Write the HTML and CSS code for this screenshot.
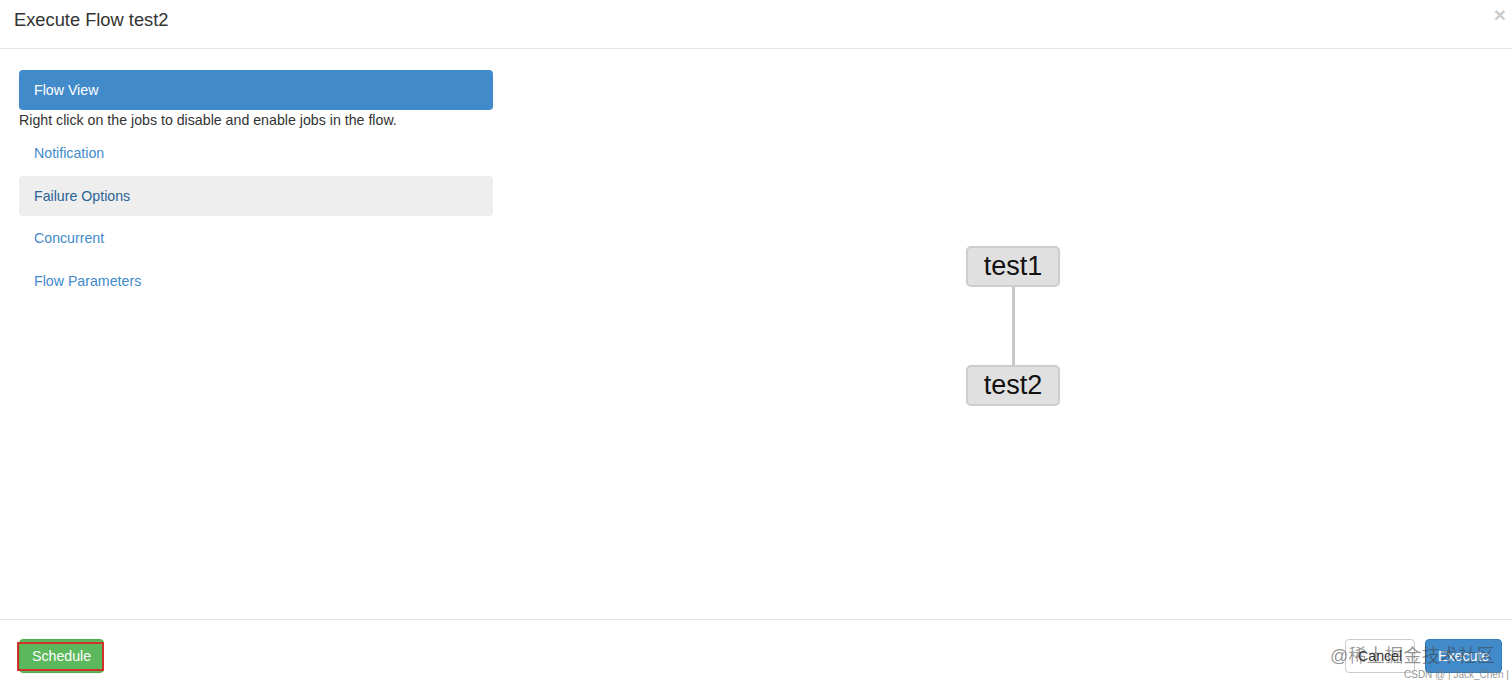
FILE: index.html
```html
<!DOCTYPE html>
<html>
<head>
<meta charset="utf-8">
<title>Execute Flow test2</title>
<link rel="stylesheet" href="styles.css">
</head>
<body>
<div class="modal">
  <div class="modal-header">
    <h4 class="modal-title">Execute Flow test2</h4>
    <span class="close">&times;</span>
  </div>
  <div class="modal-body">
    <div class="side">
      <a class="nav-item active">Flow View</a>
      <p class="hint">Right click on the jobs to disable and enable jobs in the flow.</p>
      <a class="nav-item gap2">Notification</a>
      <a class="nav-item hover gap3">Failure Options</a>
      <a class="nav-item gap2">Concurrent</a>
      <a class="nav-item gap3">Flow Parameters</a>
    </div>
    <div class="graph">
      <div class="edge"></div>
      <div class="node node-1">test1</div>
      <div class="node node-2">test2</div>
    </div>
  </div>
  <div class="modal-footer">
    <button class="btn btn-success">Schedule</button>
    <div class="right">
      <button class="btn btn-default">Cancel</button>
      <button class="btn btn-primary">Execute</button>
    </div>
  </div>
  <div class="wm-main">@稀土掘金技术社区</div>
  <div class="wm-sub">CSDN @ | Jack_Chen |</div>
</div>
</body>
</html>
```
FILE: styles.css
```css
*, *::before, *::after { box-sizing: border-box; }
html, body {
  margin: 0;
  padding: 0;
  background: #fff;
  font-family: "Liberation Sans", Arial, "Noto Sans CJK SC", sans-serif;
  font-size: 14.2px;
  color: #333;
}
.modal {
  position: relative;
  width: 1512px;
  height: 685px;
  display: flex;
  flex-direction: column;
}
.modal-header {
  position: relative;
  height: 49px;
  padding: 6px 14px 0;
  border-bottom: 1px solid #e5e5e5;
}
.modal-title {
  margin: 0;
  font-size: 18.3px;
  font-weight: normal;
  line-height: 28px;
  color: #333;
}
.close {
  position: absolute;
  right: 6px;
  top: 3px;
  font-size: 21px;
  font-weight: bold;
  line-height: 24px;
  color: #000;
  opacity: 0.2;
}
.modal-body {
  flex: 1;
  display: flex;
  padding: 21px 19px 0;
}
.side {
  width: 474px;
  display: flex;
  flex-direction: column;
}
.nav-item {
  display: block;
  height: 40px;
  padding: 10px 15px;
  line-height: 20px;
  color: #428bca;
  border-radius: 4px;
  text-decoration: none;
}
.gap2 { margin-top: 2px; }
.gap3 { margin-top: 3px; }
.nav-item.active {
  background: #428bca;
  color: #fff;
}
.nav-item.hover {
  background: #eee;
  color: #2a6496;
}
.hint {
  margin: 0;
  line-height: 21px;
  color: #333;
}
.graph {
  flex: 1;
  position: relative;
}
.node {
  position: absolute;
  left: 473px;
  width: 94px;
  height: 41px;
  background: #e0e0e0;
  border: 2px solid #cdcdcd;
  border-radius: 5px;
  text-align: center;
  font-size: 27px;
  line-height: 36px;
  color: #111;
}
.node-1 { top: 176px; }
.node-2 { top: 295px; }
.edge {
  position: absolute;
  left: 519px;
  top: 216px;
  width: 3px;
  height: 80px;
  background: #c8c8c8;
}
.modal-footer {
  height: 66px;
  padding: 19px 10px 0 19px;
  border-top: 1px solid #e5e5e5;
  display: flex;
  justify-content: space-between;
  align-items: flex-start;
}
.right { display: flex; gap: 10px; }
.btn {
  height: 34px;
  padding: 6px 12px;
  font-family: inherit;
  font-size: 14.2px;
  line-height: 20px;
  border: 1px solid transparent;
  border-radius: 4px;
}
.btn-success {
  position: relative;
  width: 85px;
  background: #5cb85c;
  border-color: #4cae4c;
  color: #fff;
}
.btn-success::after {
  content: "";
  position: absolute;
  left: -3px;
  top: 2px;
  width: 87px;
  height: 29px;
  border: 2px solid #d0312d;
}
.btn-default {
  width: 70px;
  background: #fff;
  border-color: #ccc;
  color: #333;
}
.btn-primary {
  width: 77px;
  background: #428bca;
  border-color: #357ebd;
  color: #fff;
}
.wm-main {
  position: absolute;
  left: 1330px;
  top: 644px;
  font-size: 18px;
  line-height: 24px;
  color: rgba(60, 60, 60, 0.55);
  letter-spacing: 0.3px;
}
.wm-sub {
  position: absolute;
  left: 1404px;
  top: 669px;
  font-size: 10px;
  line-height: 12px;
  color: rgba(120, 120, 120, 0.8);
}
```
